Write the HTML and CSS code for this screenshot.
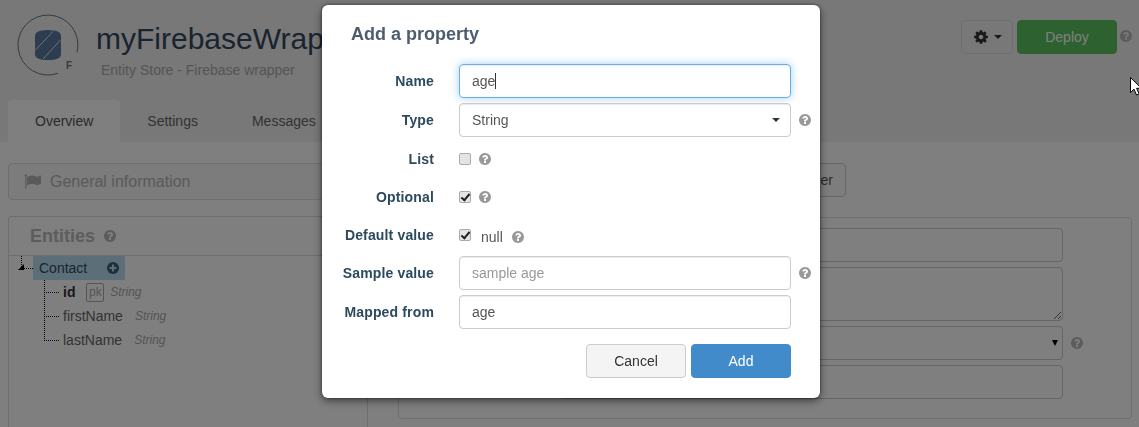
FILE: index.html
```html
<!DOCTYPE html>
<html>
<head>
<meta charset="utf-8">
<title>myFirebaseWrapper</title>
<link rel="stylesheet" href="styles.css">
</head>
<body>
<svg class="defs" width="0" height="0">
  <symbol id="i-help" viewBox="0 0 1792 1792"><path d="M1024 1376v-192q0-14-9-23t-23-9h-192q-14 0-23 9t-9 23v192q0 14 9 23t23 9h192q14 0 23-9t9-23zm256-672q0-88-55.5-163t-138.5-116-170-41q-243 0-371 213-15 24 8 42l132 100q7 6 19 6 16 0 25-12 53-68 86-92 34-24 86-24 48 0 85.5 26t37.5 59q0 38-20 61t-68 45q-63 28-115.5 86.5t-52.5 125.5v36q0 14 9 23t23 9h192q14 0 23-9t9-23q0-19 21.5-49.5t54.5-49.5q32-18 49-28.5t46-35 44.5-48 28-60.5 12.5-81zm384 192q0 209-103 385.5t-279.5 279.5-385.5 103-385.5-103-279.5-279.5-103-385.5 103-385.5 279.5-279.5 385.5-103 385.5 103 279.5 279.5 103 385.5z"/></symbol>
  <symbol id="i-cog" viewBox="0 0 1792 1792"><path d="M1152 896q0-106-75-181t-181-75-181 75-75 181 75 181 181 75 181-75 75-181zm512-109v222q0 12-8 23t-20 13l-185 28q-19 54-39 91 35 50 107 138 10 12 10 25t-9 23q-27 37-99 108t-94 71q-12 0-26-9l-138-108q-44 23-91 38-16 136-29 186-7 28-36 28h-222q-14 0-24.5-8.5t-11.5-21.5l-28-184q-49-16-90-37l-141 107q-10 9-25 9-14 0-25-11-126-114-165-168-7-10-7-23 0-12 8-23 15-21 51-66.5t54-70.5q-27-50-41-99l-183-27q-13-2-21-12.5t-8-23.5v-222q0-12 8-23t19-13l186-28q14-46 39-92-40-57-107-138-10-12-10-24 0-10 9-23 26-36 98.5-107.5t94.5-71.5q13 0 26 10l138 107q44-23 91-38 16-136 29-186 7-28 36-28h222q14 0 24.5 8.5t11.5 21.5l28 184q49 16 90 37l142-107q9-9 24-9 13 0 25 10 129 119 165 170 7 8 7 22 0 12-8 23-15 21-51 66.5t-54 70.5q26 50 41 98l183 28q13 2 21 12.5t8 23.5z"/></symbol>
  <symbol id="i-flag" viewBox="0 0 1792 1792"><path d="M320 256q0 72-64 110v1266q0 13-9.5 22.5t-22.5 9.5h-64q-13 0-22.5-9.5t-9.5-22.5v-1266q-64-38-64-110 0-53 37.5-90.5t90.5-37.5 90.5 37.5 37.5 90.5zm1472 64v763q0 25-12.5 38.5t-39.5 27.5q-215 116-369 116-61 0-123.5-22t-108.5-48-115.5-48-142.5-22q-192 0-464 146-17 9-33 9-26 0-45-19t-19-45v-742q0-32 31-55 21-14 79-43 236-120 421-120 107 0 200 29t219 88q38 19 88 19 54 0 117.5-21t110-47 88-47 54.5-21q26 0 45 19t19 45z"/></symbol>
</svg>

<div class="head">
  <div class="head-top">
    <svg class="logo" width="64" height="64" viewBox="0 0 64 64">
      <path d="M61 39.5 A30 30 0 1 0 42 60.3" fill="none" stroke="#6a7784" stroke-width="1"/>
      <path d="M19 23 Q19 17 32 17 Q45 17 45 23 V41 Q45 47 32 47 Q19 47 19 41 Z" fill="#5b7a9e"/>
      <path d="M19.5 37 L37 18.5 M27 46 L44.5 27" stroke="#e4e8ec" stroke-width="1" fill="none"/>
      <text x="50" y="56" class="logo-f">F</text>
    </svg>
    <div class="titles">
      <div class="app-name">myFirebaseWrap</div>
      <div class="app-sub">Entity Store - Firebase wrapper</div>
    </div>
    <div class="actions">
      <button class="btn btn-gear"><svg width="16" height="16"><use href="#i-cog"/></svg><span class="caret"></span></button>
      <button class="btn btn-deploy">Deploy</button>
      <svg class="help help-dark" width="14" height="14"><use href="#i-help"/></svg>
    </div>
  </div>
  <div class="tabs">
    <div class="tab active">Overview</div>
    <div class="tab">Settings</div>
    <div class="tab">Messages</div>
  </div>
</div>

<div class="content">
  <div class="info-row">
    <div class="info-bar"><svg width="17" height="17"><use href="#i-flag"/></svg>General information</div>
    <button class="btn btn-plain">er</button>
  </div>
  <div class="columns">
    <div class="entities">
      <div class="entities-head">
        <span class="entities-title">Entities</span>
        <svg class="help help-dark" width="14" height="14"><use href="#i-help"/></svg>
        <button class="btn btn-small"></button>
      </div>
      <div class="tree">
        <div class="node-row">
          <span class="expander"></span>
          <span class="node">Contact
            <svg class="plus" width="14" height="14" viewBox="0 0 14 14"><circle cx="7" cy="7" r="6"/><path d="M3.5 7h7M7 3.5v7" stroke="#bcdcec" stroke-width="2"/></svg>
          </span>
        </div>
        <ul class="props">
          <li><b>id</b><span class="pk">pk</span><i>String</i></li>
          <li>firstName<i>String</i></li>
          <li>lastName<i>String</i></li>
        </ul>
      </div>
    </div>
    <div class="detail">
      <div class="field"></div>
      <textarea class="field area"></textarea>
      <div class="detail-select">
        <div class="field fake-select"><span class="native-arrow"></span></div>
        <svg class="help help-dark" width="14" height="14"><use href="#i-help"/></svg>
      </div>
      <div class="field"></div>
    </div>
  </div>
</div>

<div class="backdrop"></div>

<div class="modal">
  <h4 class="modal-title">Add a property</h4>
  <div class="row">
    <label>Name</label>
    <div class="control focused">age<span class="text-caret"></span></div>
  </div>
  <div class="row">
    <label>Type</label>
    <div class="control select">String<span class="caret"></span></div>
    <svg class="help side" width="14" height="14"><use href="#i-help"/></svg>
  </div>
  <div class="row check">
    <label>List</label>
    <input type="checkbox">
    <svg class="help" width="14" height="14"><use href="#i-help"/></svg>
  </div>
  <div class="row check">
    <label>Optional</label>
    <input type="checkbox" checked>
    <svg class="help" width="14" height="14"><use href="#i-help"/></svg>
  </div>
  <div class="row check">
    <label>Default value</label>
    <input type="checkbox" checked>
    <span class="null">null</span>
    <svg class="help help-low" width="14" height="14"><use href="#i-help"/></svg>
  </div>
  <div class="row">
    <label>Sample value</label>
    <input class="control" type="text" placeholder="sample age">
    <svg class="help side" width="14" height="14"><use href="#i-help"/></svg>
  </div>
  <div class="row">
    <label>Mapped from</label>
    <input class="control" type="text" value="age">
  </div>
  <div class="modal-foot">
    <button class="btn btn-cancel">Cancel</button>
    <button class="btn btn-add">Add</button>
  </div>
</div>

<svg class="pointer" width="12" height="19" viewBox="0 0 12 19"><path d="M.5.5v15l3.5-3.3 2.5 5.8 2.6-1.1-2.5-5.6h4.9z" fill="#fff" stroke="#000" stroke-width="1"/></svg>
</body>
</html>
```

FILE: styles.css
```css
html, body {
	margin: 0;
	height: 427px;
	overflow: hidden;
}
body {
	background-color: #ffffff;
	color: #333;
	font-family: "Liberation Sans", Arial, sans-serif;
	font-size: 14px;
}
.defs {
	position: absolute;
}
.help {
	fill: #999;
	flex: none;
}
.help-dark {
	fill: #b8b8b8;
}

/* page header */
.head {
	background-color: #f0f0f0;
	height: 142px;
}
.head-top {
	display: flex;
	height: 100px;
}
.logo {
	margin: 13px 0 0 16px;
}
.logo-f {
	font-size: 10px;
	font-weight: bold;
	fill: #6a7784;
}
.titles {
	margin-left: 16px;
}
.app-name {
	color: #34495e;
	font-size: 30px;
	line-height: 36px;
	margin-top: 21px;
}
.app-sub {
	color: #aaa;
	font-size: 14px;
	line-height: 18px;
	margin: 4px 0 0 5px;
}
.actions {
	display: flex;
	align-items: flex-start;
	margin: 20px 6px 0 auto;
}
.actions .help {
	margin: 9px 0 0 2px;
}
.btn {
	font-family: inherit;
	font-size: 14px;
	border-radius: 4px;
	border: 1px solid #ccc;
	background-color: #fff;
	color: #333;
	padding: 0;
	height: 34px;
}
.btn-gear {
	width: 52px;
	display: flex;
	align-items: center;
	justify-content: center;
	background-color: #f0f0f0;
	border-color: #ddd;
	margin-right: 4px;
}
.btn-gear svg {
	margin-right: 5px;
	fill: #333;
}
.btn-deploy {
	width: 100px;
	background-color: #5ac560;
	border-color: #5ac560;
	color: #fff;
}
.caret {
	display: inline-block;
	border-top: 4px solid #333;
	border-left: 4px solid transparent;
	border-right: 4px solid transparent;
}
.tabs {
	display: flex;
	padding-left: 8px;
}
.tab {
	height: 42px;
	line-height: 42px;
	padding: 0 27px;
	color: #666;
	border-radius: 4px 4px 0 0;
}
.tab.active {
	background-color: #ffffff;
	color: #555;
}

/* page content */
.content {
	padding: 21px 7px 0 8px;
}
.info-row {
	display: flex;
	align-items: flex-start;
	justify-content: space-between;
}
.info-bar {
	display: flex;
	align-items: center;
	width: 680px;
	height: 35px;
	border: 1px solid #ddd;
	border-radius: 4px;
	background-color: #f8f8f8;
	color: #b4b4b4;
	font-size: 16px;
	box-sizing: content-box;
}
.info-bar svg {
	fill: #b4b4b4;
	margin: 0 9px 0 15px;
}
.btn-plain {
	width: 146px;
	text-align: right;
	padding-right: 12px;
	margin-right: 286px;
	background-color: #fbfbfb;
	color: #555;
}
.columns {
	display: grid;
	grid-template-columns: 360px 734px;
	column-gap: 30px;
	align-items: start;
	margin-top: 16px;
}
.entities {
	border: 1px solid #ddd;
	border-bottom: none;
	border-radius: 4px 4px 0 0;
	height: 210px;
}
.entities-head {
	display: flex;
	align-items: center;
	height: 38px;
	padding-left: 21px;
	border-bottom: 1px solid #ddd;
}
.entities-title {
	font-size: 18px;
	font-weight: bold;
	color: #bbb;
	margin-right: 8px;
}
.btn-small {
	height: 21px;
	width: 40px;
	margin: 0 0 0 auto;
}
.tree {
	padding-left: 24px;
}
.node-row {
	display: flex;
	height: 24px;
	position: relative;
}
.expander {
	position: absolute;
	left: -12px;
	top: 0;
	width: 11px;
	height: 12px;
	border-left: 1px dotted #000;
	border-bottom: 1px dotted #000;
}
.expander::after {
	content: "";
	position: absolute;
	left: -4px;
	top: 8px;
	border-right: 6px solid #000;
	border-top: 6px solid transparent;
}
.node {
	display: flex;
	align-items: center;
	width: 86px;
	padding-left: 6px;
	background-color: #b8dff0;
	border-radius: 1px;
	color: #34495e;
}
.plus {
	margin-left: auto;
	margin-right: 5px;
	fill: #34607a;
}
.props {
	list-style: none;
	margin: 0;
	padding: 0 0 0 30px;
}
.props li {
	display: flex;
	align-items: center;
	height: 24px;
	color: #666;
	position: relative;
}
.props li::before {
	content: "";
	position: absolute;
	left: -19px;
	top: -12px;
	width: 14px;
	height: 24px;
	border-left: 1px dotted #000;
	border-bottom: 1px dotted #000;
}
.props li:first-child::before {
	top: 0;
	height: 12px;
}
.props b {
	color: #333;
}
.props i {
	color: #a8a8a8;
	font-size: 12px;
	margin-left: 12px;
}
.pk {
	border: 1px solid #aaa;
	border-radius: 2px;
	color: #aaa;
	font-size: 12px;
	padding: 0 1.5px;
	height: 17px;
	line-height: 17px;
	margin-left: 11px;
}
.props .pk + i {
	margin-left: 6px;
}
.detail {
	border: 1px solid #ddd;
	border-radius: 4px;
	margin-top: 1px;
	height: 190px;
	padding: 10px 0 0 160px;
}
.field {
	box-sizing: border-box;
	display: block;
	width: 504px;
	height: 34px;
	border: 1px solid #ccc;
	border-radius: 4px;
	margin-bottom: 5px;
	background: transparent;
	position: relative;
}
.area {
	height: 54px;
	margin: 0 0 5px;
	padding: 0;
	outline: none;
}
.detail-select {
	display: flex;
}
.detail-select .help {
	margin: 10px 0 0 7px;
}
.native-arrow {
	position: absolute;
	right: 4px;
	top: 13px;
	border-top: 6px solid #000;
	border-left: 3px solid transparent;
	border-right: 3px solid transparent;
}

.backdrop {
	position: fixed;
	left: 0;
	top: 0;
	right: 0;
	bottom: 0;
	background-color: rgba(0, 0, 0, .5);
}

/* dialog */
.modal {
	position: fixed;
	left: 322px;
	top: 5px;
	width: 498px;
	height: 393px;
	box-sizing: border-box;
	background-color: #fff;
	border-radius: 6px;
	box-shadow: 0 3px 9px rgba(0, 0, 0, .5), 0 0 3px rgba(0, 0, 0, .5);
}
.modal-title {
	margin: 0;
	padding-left: 29px;
	height: 59px;
	line-height: 58px;
	font-size: 18px;
	font-weight: bold;
	color: #4d5d6e;
}
.row {
	display: flex;
	align-items: center;
	height: 34px;
	margin-bottom: 5px;
}
.row.check {
	height: 33px;
}
.row label {
	width: 112px;
	margin-right: 25px;
	text-align: right;
	font-weight: bold;
	letter-spacing: .15px;
	color: #2c4a5e;
}
.control {
	box-sizing: border-box;
	width: 332px;
	height: 34px;
	border: 1px solid #ccc;
	border-radius: 4px;
	padding: 0 12px;
	font-family: inherit;
	font-size: 14px;
	line-height: 32px;
	color: #555;
	outline: none;
	box-shadow: inset 0 1px 1px rgba(0, 0, 0, .075);
}
.control::placeholder {
	color: #999;
}
.focused {
	border-color: #66afe9;
	box-shadow: inset 0 1px 1px rgba(0, 0, 0, .075), 0 0 8px rgba(102, 175, 233, .6);
}
.text-caret {
	display: inline-block;
	height: 16px;
	border-left: 1px solid #333;
	vertical-align: -3px;
}
.select {
	display: flex;
	align-items: center;
	justify-content: space-between;
	padding-right: 10px;
}
.side {
	margin-left: 7px;
}
.check input {
	appearance: none;
	box-sizing: border-box;
	width: 12px;
	height: 12px;
	margin: 0 7px 0 0;
	background-color: #e4e4e4;
	border: 1px solid #aaa;
	border-radius: 2px;
	position: relative;
}
.check input:checked::after {
	content: "";
	position: absolute;
	left: 3px;
	top: 0;
	width: 3px;
	height: 7px;
	border-right: 2px solid #222;
	border-bottom: 2px solid #222;
	transform: rotate(40deg);
}
.null {
	color: #555;
	margin: 4px 8px 0 3px;
}
.help-low {
	margin-top: 4px;
}
.modal-foot {
	display: flex;
	justify-content: flex-end;
	gap: 5px;
	width: 469px;
	margin-top: 15px;
}
.btn-cancel {
	width: 100px;
	background-color: #f4f4f4;
	color: #333;
}
.btn-add {
	width: 100px;
	background-color: #428bca;
	border-color: #428bca;
	color: #fff;
}
.pointer {
	position: fixed;
	left: 1130px;
	top: 77px;
}
```
